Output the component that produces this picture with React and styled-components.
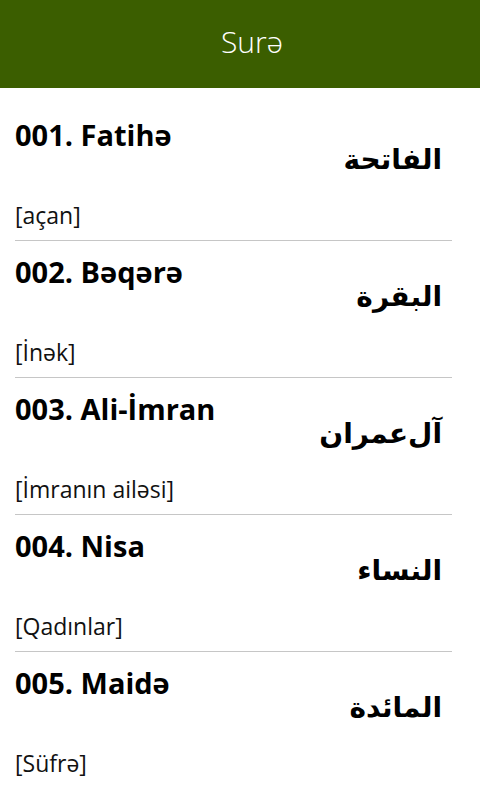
import React from "react";
import styled, { createGlobalStyle } from "styled-components";

const GlobalStyle = createGlobalStyle`
  html, body { margin: 0; padding: 0; background: #ffffff; }
  body { font-family: "Open Sans", "Noto Sans", sans-serif; }
  * { box-sizing: border-box; }
`;

const Page = styled.div`
  width: 480px;
  min-height: 800px;
  background: #ffffff;
  display: flex;
  flex-direction: column;
`;

const Header = styled.header`
  height: 88px;
  background: #3b5e00;
  display: flex;
  align-items: center;
  justify-content: center;
  padding-left: 24px;
`;

const HeaderTitle = styled.h1`
  margin: 0 0 4px;
  font-family: "Open Sans", sans-serif;
  font-weight: 300;
  font-size: 30px;
  line-height: 36px;
  color: #ffffff;
`;

const List = styled.ul`
  list-style: none;
  margin: 0;
  padding: 16px 28px 0 15px;
`;

const Row = styled.li`
  display: grid;
  grid-template-columns: 1fr auto;
  grid-template-rows: auto auto;
  padding: 14px 10px 11px 0;
  border-bottom: 1px solid ${(p) => (p.$last ? "transparent" : "#c6c6c6")};
`;

const Title = styled.div`
  grid-column: 1;
  grid-row: 1;
  font-family: "Open Sans", sans-serif;
  font-weight: 700;
  font-size: 29px;
  line-height: 34px;
  color: #000000;
  white-space: nowrap;
`;

const Meaning = styled.div`
  grid-column: 1;
  grid-row: 2;
  margin-top: 49px;
  font-family: "Open Sans", sans-serif;
  font-weight: 400;
  font-size: 23px;
  line-height: 28px;
  color: #111111;
`;

const Arabic = styled.div`
  grid-column: 2;
  grid-row: 1 / span 2;
  align-self: start;
  margin-top: 22px;
  direction: rtl;
  font-family: "DejaVu Sans", sans-serif;
  font-weight: 700;
  font-size: 28px;
  line-height: 40px;
  color: #000000;
`;

const suras = [
  { n: "001", name: "Fatihə", ar: "الفاتحة", tr: "[açan]" },
  { n: "002", name: "Bəqərə", ar: "البقرة", tr: "[İnək]" },
  { n: "003", name: "Ali-İmran", ar: "آل‌عمران", tr: "[İmranın ailəsi]" },
  { n: "004", name: "Nisa", ar: "النساء", tr: "[Qadınlar]" },
  { n: "005", name: "Maidə", ar: "المائدة", tr: "[Süfrə]" },
];

export default function App() {
  return (
    <>
      <GlobalStyle />
      <Page>
        <Header>
          <HeaderTitle>Surə</HeaderTitle>
        </Header>
        <List>
          {suras.map((s, i) => (
            <Row key={s.n} $last={i === suras.length - 1}>
              <Title>{`${s.n}. ${s.name}`}</Title>
              <Arabic lang="ar">{s.ar}</Arabic>
              <Meaning>{s.tr}</Meaning>
            </Row>
          ))}
        </List>
      </Page>
    </>
  );
}
